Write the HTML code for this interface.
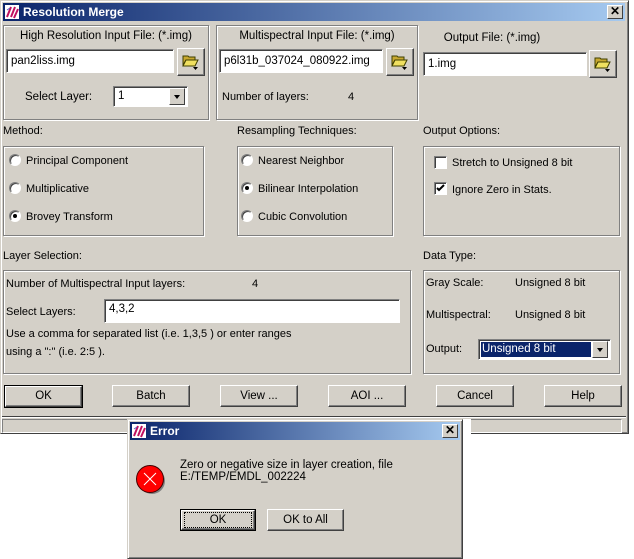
<!DOCTYPE html>
<html><head><meta charset="utf-8"><style>
*{margin:0;padding:0;box-sizing:border-box}
body{width:634px;height:554px;background:#fff;position:relative;overflow:hidden;font-family:"Liberation Sans",sans-serif;font-size:11px;color:#000}
.a{position:absolute;white-space:nowrap}
.win{background:#d4d0c8;border:1px solid;border-color:#d4d0c8 #404040 #404040 #d4d0c8;box-shadow:inset 1px 1px 0 #fff,inset -1px -1px 0 #808080}
.title{position:absolute;height:18px;background:linear-gradient(90deg,#0a246a,#a6caf0);color:#fff;font-weight:bold;font-size:12px;line-height:18px;padding-left:20px}
.etch{position:absolute;border:1px solid #808080;box-shadow:1px 1px 0 #fff,inset 1px 1px 0 #fff}
.tb{position:absolute;background:#fff;border:1px solid;border-color:#808080 #fff #fff #808080;box-shadow:inset 1px 1px 0 #404040;padding:4px 4px;font-size:11.5px;line-height:14px}
.btn{position:absolute;background:#d4d0c8;border:1px solid;border-color:#fff #404040 #404040 #fff;box-shadow:inset -1px -1px 0 #808080;text-align:center;font-size:11.5px}
.def{outline:1px solid #000}
.rad{position:absolute;width:12px;height:12px;border-radius:50%;background:#fff;border:1px solid;border-color:#808080 #fff #fff #808080;box-shadow:inset 1px 1px 0 #404040}
.rad.on::after{content:"";position:absolute;left:3px;top:3px;width:4px;height:4px;border-radius:50%;background:#000}
.chk{position:absolute;width:13px;height:13px;background:#fff;border:1px solid;border-color:#808080 #fff #fff #808080;box-shadow:inset 1px 1px 0 #404040}
.x{position:absolute;width:16px;height:14px;background:#d4d0c8;border:1px solid;border-color:#fff #404040 #404040 #fff;font-size:12px;line-height:11px;text-align:center;font-weight:bold;color:#000}
.dd{position:absolute;width:16px;background:#d4d0c8;border:1px solid;border-color:#fff #404040 #404040 #fff}
.dd::after{content:"";position:absolute;left:4px;top:6px;border:3px solid transparent;border-top:4px solid #000;border-bottom:0}
.ico{position:absolute;width:14px;height:14px}
</style></head><body>

<div class="a win" style="left:0;top:0;width:629px;height:434px"></div>
<div class="title" style="left:3px;top:3px;width:622px">Resolution Merge</div>
<svg class="ico" style="left:5px;top:5px" viewBox="0 0 14 14"><rect width="14" height="14" fill="#fff"/><path d="M2 12L6 2M6 12L10 2M9 13L13 4" stroke="#c01060" stroke-width="2"/><path d="M2 5L5 3" stroke="#6060c0"/></svg>
<div class="x" style="left:607px;top:5px">✕</div>

<!-- group 1 -->
<div class="etch" style="left:3px;top:25px;width:206px;height:95px"></div>
<div class="a" style="left:3px;top:30px;width:206px;text-align:center;font-size:11.5px">High Resolution Input File: (*.img)</div>
<div class="tb" style="left:6px;top:49px;width:168px;height:24px">pan2liss.img</div>
<div class="btn" style="left:177px;top:48px;width:28px;height:28px"></div>
<svg class="a" style="left:182px;top:53px" width="18" height="17" viewBox="0 0 18 17"><path d="M1 3h5l1 1h6v3H4L1 12z" fill="#c8a830" stroke="#404000"/><path d="M4 7h12l-3 6H1z" fill="#f0e060" stroke="#404000"/><path d="M11 14h5l-2.5 3z" fill="#000"/></svg>
<div class="a" style="left:25px;top:91px;font-size:11.5px">Select Layer:</div>
<div class="tb" style="left:113px;top:86px;width:75px;height:21px;padding:2px 4px">1</div>
<div class="dd" style="left:169px;top:88px;height:17px"></div>

<!-- group 2 -->
<div class="etch" style="left:216px;top:25px;width:202px;height:95px"></div>
<div class="a" style="left:216px;top:30px;width:202px;text-align:center;font-size:11.5px">Multispectral Input File: (*.img)</div>
<div class="tb" style="left:219px;top:49px;width:164px;height:24px">p6l31b_037024_080922.img</div>
<div class="btn" style="left:386px;top:48px;width:28px;height:28px"></div>
<svg class="a" style="left:391px;top:53px" width="18" height="17" viewBox="0 0 18 17"><path d="M1 3h5l1 1h6v3H4L1 12z" fill="#c8a830" stroke="#404000"/><path d="M4 7h12l-3 6H1z" fill="#f0e060" stroke="#404000"/><path d="M11 14h5l-2.5 3z" fill="#000"/></svg>
<div class="a" style="left:222px;top:91px">Number of layers:</div>
<div class="a" style="left:348px;top:91px">4</div>

<!-- output file -->
<div class="a" style="left:423px;top:32px;width:138px;text-align:center;font-size:11.5px">Output File: (*.img)</div>
<div class="tb" style="left:423px;top:52px;width:164px;height:24px">1.img</div>
<div class="btn" style="left:589px;top:50px;width:28px;height:28px"></div>
<svg class="a" style="left:594px;top:55px" width="18" height="17" viewBox="0 0 18 17"><path d="M1 3h5l1 1h6v3H4L1 12z" fill="#c8a830" stroke="#404000"/><path d="M4 7h12l-3 6H1z" fill="#f0e060" stroke="#404000"/><path d="M11 14h5l-2.5 3z" fill="#000"/></svg>

<!-- method -->
<div class="a" style="left:3px;top:125px">Method:</div>
<div class="etch" style="left:3px;top:146px;width:201px;height:90px"></div>
<div class="rad" style="left:9px;top:154px"></div><div class="a" style="left:26px;top:155px">Principal Component</div>
<div class="rad" style="left:9px;top:182px"></div><div class="a" style="left:26px;top:183px">Multiplicative</div>
<div class="rad on" style="left:9px;top:210px"></div><div class="a" style="left:26px;top:211px">Brovey Transform</div>

<div class="a" style="left:237px;top:125px">Resampling Techniques:</div>
<div class="etch" style="left:237px;top:146px;width:156px;height:90px"></div>
<div class="rad" style="left:241px;top:154px"></div><div class="a" style="left:258px;top:155px">Nearest Neighbor</div>
<div class="rad on" style="left:241px;top:182px"></div><div class="a" style="left:258px;top:183px">Bilinear Interpolation</div>
<div class="rad" style="left:241px;top:210px"></div><div class="a" style="left:258px;top:211px">Cubic Convolution</div>

<div class="a" style="left:423px;top:125px">Output Options:</div>
<div class="etch" style="left:423px;top:146px;width:197px;height:90px"></div>
<div class="chk" style="left:434px;top:156px"></div><div class="a" style="left:452px;top:157px">Stretch to Unsigned 8 bit</div>
<div class="chk" style="left:434px;top:182px"></div>
<svg class="a" style="left:436px;top:184px" width="9" height="9" viewBox="0 0 9 9"><path d="M1 4l2 2 5-5" stroke="#000" stroke-width="2" fill="none"/></svg>
<div class="a" style="left:452px;top:184px">Ignore Zero in Stats.</div>

<!-- layer selection -->
<div class="a" style="left:3px;top:250px">Layer Selection:</div>
<div class="etch" style="left:3px;top:270px;width:408px;height:104px"></div>
<div class="a" style="left:6px;top:278px">Number of Multispectral Input layers:</div>
<div class="a" style="left:252px;top:278px">4</div>
<div class="a" style="left:6px;top:306px">Select Layers:</div>
<div class="tb" style="left:104px;top:299px;width:296px;height:24px;padding-top:2px">4,3,2</div>
<div class="a" style="left:6px;top:328px">Use a comma for separated list (i.e. 1,3,5 ) or enter ranges</div>
<div class="a" style="left:6px;top:346px">using a ":" (i.e. 2:5 ).</div>

<div class="a" style="left:423px;top:250px">Data Type:</div>
<div class="etch" style="left:423px;top:270px;width:197px;height:104px"></div>
<div class="a" style="left:426px;top:277px">Gray Scale:</div><div class="a" style="left:515px;top:277px">Unsigned 8 bit</div>
<div class="a" style="left:426px;top:309px">Multispectral:</div><div class="a" style="left:515px;top:309px">Unsigned 8 bit</div>
<div class="a" style="left:426px;top:343px">Output:</div>
<div class="tb" style="left:478px;top:339px;width:133px;height:21px;padding:2px"><div style="background:#0a246a;color:#fff;outline:1px dotted #fff;height:15px;width:110px;padding-left:1px;line-height:15px">Unsigned 8 bit</div></div>
<div class="dd" style="left:592px;top:341px;height:17px"></div>

<!-- buttons -->
<div class="btn def" style="left:5px;top:386px;width:77px;height:21px;line-height:19px">OK</div>
<div class="btn" style="left:112px;top:385px;width:78px;height:22px;line-height:20px">Batch</div>
<div class="btn" style="left:220px;top:385px;width:78px;height:22px;line-height:20px">View ...</div>
<div class="btn" style="left:328px;top:385px;width:78px;height:22px;line-height:20px">AOI ...</div>
<div class="btn" style="left:436px;top:385px;width:78px;height:22px;line-height:20px">Cancel</div>
<div class="btn" style="left:544px;top:385px;width:78px;height:22px;line-height:20px">Help</div>

<!-- status area -->
<div class="a" style="left:2px;top:416px;width:624px;height:1px;background:#404040"></div>
<div class="a" style="left:2px;top:417px;width:624px;height:1px;background:#fff"></div>
<div class="a" style="left:2px;top:419px;width:620px;height:14px;border:1px solid;border-color:#808080 #fff #fff #808080"></div>
<div class="a" style="left:133px;top:419px;width:184px;height:14px;border-top:1px solid #fff;background:#d4d0c8"></div>
<div class="a" style="left:331px;top:419px;width:140px;height:16px;background:#fff"></div>
<div class="a" style="left:0;top:434px;width:634px;height:120px;background:#fff"></div>

<!-- error dialog -->
<div class="a win" style="left:127px;top:419px;width:336px;height:140px"></div>
<div class="title" style="left:130px;top:422px;width:330px">Error</div>
<svg class="ico" style="left:132px;top:424px" viewBox="0 0 14 14"><rect width="14" height="14" fill="#fff"/><path d="M2 12L6 2M6 12L10 2M9 13L13 4" stroke="#c01060" stroke-width="2"/><path d="M2 5L5 3" stroke="#6060c0"/></svg>
<div class="x" style="left:442px;top:424px">✕</div>
<svg class="a" style="left:135px;top:464px" width="32" height="32" viewBox="0 0 32 32"><circle cx="17" cy="17" r="13" fill="#808080"/><circle cx="15" cy="15" r="13.5" fill="#f00" stroke="#400" stroke-width="1"/><path d="M9 9l12 12M21 9L9 21" stroke="#fff" stroke-width="1"/></svg>
<div class="a" style="left:180px;top:459px;font-size:11.5px;line-height:12px">Zero or negative size in layer creation, file<br>E:/TEMP/EMDL_002224</div>
<div class="btn def" style="left:181px;top:510px;width:74px;height:20px;line-height:18px"><span style="outline:1px dotted #000;outline-offset:0;display:inline-block;width:66px;line-height:14px">OK</span></div>
<div class="btn" style="left:267px;top:509px;width:77px;height:22px;line-height:20px">OK to All</div>
</body></html>
